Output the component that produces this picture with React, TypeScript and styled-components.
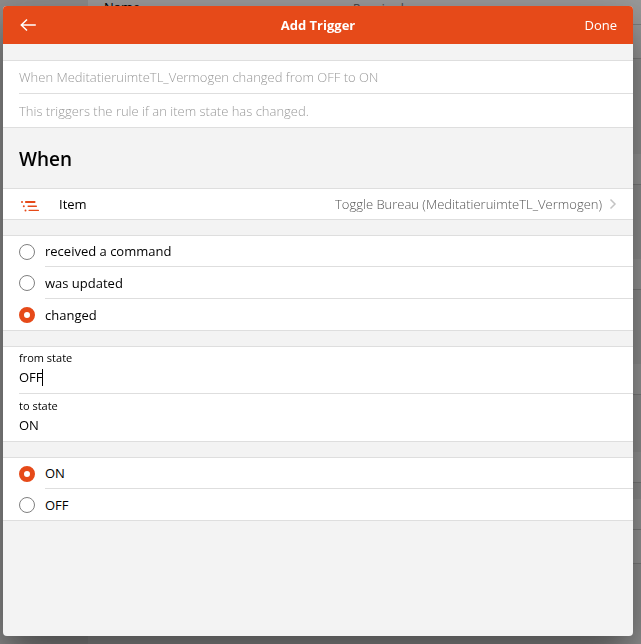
import React, { useState } from 'react';
import styled, { createGlobalStyle, css } from 'styled-components';

const accent = '#e64a19';
const line = '#dedede';
const surface = '#f3f3f3';

const GlobalStyle = createGlobalStyle`
  *, *::before, *::after { box-sizing: border-box; }
  html, body { margin: 0; height: 100%; overflow: hidden; }
  #root { height: 100%; }
  body, button, input {
    font-family: 'Open Sans', 'Noto Sans', sans-serif;
    font-size: 13px;
    line-height: 20px;
    color: #000;
  }
`;

/* Page behind the popup */
const Page = styled.div`
  display: flex;
  height: 100%;
  overflow: hidden;
  background: ${surface};
`;

const Sidebar = styled.aside`
  flex: 0 0 88px;
  background: #e9e9e9;
`;

const PageContent = styled.main`
  flex: 1;
`;

const PageGroup = styled.div<{ $gap: number }>`
  margin-top: ${(p) => p.$gap}px;
  background: #fff;
`;

const PageRow = styled.div<{ $height: number }>`
  display: grid;
  grid-template-columns: 249px 1fr;
  height: ${(p) => p.$height}px;
  padding-left: 16px;
  border-bottom: 1px solid #d2d2d2;
  line-height: 14px;
`;

const PageHint = styled.span`
  color: #777;
  font-size: 12px;
  line-height: 18px;
`;

/* Popup */
const Backdrop = styled.div`
  position: fixed;
  inset: 0;
  display: flex;
  padding: 6px 8px 8px 3px;
  background: rgba(0, 0, 0, 0.4);
`;

const Popup = styled.section`
  flex: 1;
  display: flex;
  flex-direction: column;
  overflow: hidden;
  border-radius: 4px;
  background: ${surface};
  box-shadow: 0 20px 44px rgba(0, 0, 0, 0.5);
`;

const Navbar = styled.header`
  display: grid;
  grid-template-columns: 1fr auto 1fr;
  align-items: center;
  height: 38px;
  padding: 0 16px;
  background: ${accent};
`;

const NavButton = styled.button<{ $end?: boolean }>`
  display: flex;
  justify-self: ${(p) => (p.$end ? 'end' : 'start')};
  padding: 0;
  border: 0;
  background: none;
  color: #fff;
  font-weight: 500;
  cursor: pointer;
`;

const Title = styled.h1`
  margin: 0;
  color: #fff;
  font-size: 13px;
  font-weight: 700;
  line-height: 20px;
`;

const Heading = styled.h2`
  margin: 0;
  padding: 16px 16px 14px;
  font-size: 19px;
  font-weight: 600;
  line-height: 30px;
`;

const List = styled.div<{ $gap?: number }>`
  margin-top: ${(p) => p.$gap ?? 15}px;
  background: #fff;
  border: solid ${line};
  border-width: 1px 0;
`;

const divider = css`
  border-bottom: 1px solid ${line};
`;

const TextRow = styled.div`
  padding-left: 16px;
`;

const PlainInput = styled.input<{ $divided?: boolean }>`
  display: block;
  width: 100%;
  height: 33px;
  padding: 0;
  border: 0;
  outline: none;
  background: transparent;
  font-weight: 300;
  ${(p) => p.$divided && divider}
  &::placeholder { color: #999; opacity: 1; }
`;

const ItemLink = styled.a`
  display: flex;
  align-items: center;
  height: 30px;
  padding: 0 16px;
  color: #000;
  text-decoration: none;
`;

const ItemTitle = styled.span`
  flex: 1;
  padding-left: 16px;
`;

const ItemValue = styled.span`
  padding-right: 7px;
  color: #555;
  font-weight: 300;
`;

const RadioLabel = styled.label`
  display: flex;
  align-items: center;
  gap: 10px;
  padding-left: 16px;
  cursor: pointer;
`;

const Radio = styled.input`
  appearance: none;
  flex: none;
  width: 16px;
  height: 16px;
  margin: 0;
  border: 1px solid #808080;
  border-radius: 50%;
  background: #fff;
  &:checked { border: 5px solid ${accent}; }
`;

const RadioText = styled.span`
  flex: 1;
  height: 32px;
  padding-top: 6px;
  ${divider}
  ${RadioLabel}:first-of-type & { height: 31px; padding-top: 5px; }
  ${RadioLabel}:last-of-type & { border-bottom: 0; height: 31px; }
`;

const Field = styled.div<{ $divided?: boolean }>`
  height: 47px;
  margin-left: 16px;
  padding-top: ${(p) => (p.$divided ? 2 : 3)}px;
  ${(p) => p.$divided && divider}
`;

const FieldLabel = styled.label`
  display: block;
  font-size: 11px;
  line-height: 18px;
`;

const FieldLine = styled.div`
  display: flex;
  align-items: center;
`;

const FieldInput = styled.input<{ $fit?: boolean }>`
  ${(p) => (p.$fit ? 'field-sizing: content; caret-color: transparent;' : 'flex: 1;')}
  height: 20px;
  padding: 0;
  border: 0;
  outline: none;
  background: transparent;
`;

const Caret = styled.span`
  width: 1px;
  height: 17px;
  margin-left: -1px;
  background: #000;
`;

const BackIcon = () => (
  <svg width="18" height="14" viewBox="0 0 18 14" fill="none" stroke="#fff" strokeWidth="1.5" aria-hidden="true">
    <path d="M8 1.500 2.300 7 8 12.500M2.500 7h14.300" />
  </svg>
);

const ItemIcon = () => (
  <svg width="24" height="16" viewBox="0 0 24 16" fill={accent} aria-hidden="true">
    <rect x="6" y="5" width="10.500" height="2" rx="0.800" />
    <rect x="8.500" y="9.600" width="9.500" height="1.300" rx="0.600" />
    <rect x="9.500" y="13.800" width="10.500" height="1.300" rx="0.600" />
    <circle cx="3" cy="6" r="1" />
    <circle cx="4.800" cy="10.200" r="1" />
    <circle cx="6.500" cy="14.500" r="1" />
  </svg>
);

const Chevron = () => (
  <svg width="8" height="12" viewBox="0 0 8 12" fill="none" stroke="#c4c4c4" strokeWidth="1.500" aria-hidden="true">
    <path d="M1.500 1.500 6 6l-4.500 4.500" />
  </svg>
);

type RadioListProps = {
  name: string;
  options: string[];
  value: string;
  onChange: (value: string) => void;
};

const RadioList = ({ name, options, value, onChange }: RadioListProps) => (
  <List role="radiogroup" aria-label={name}>
    {options.map((option) => (
      <RadioLabel key={option}>
        <Radio type="radio" name={name} checked={value === option} onChange={() => onChange(option)} />
        <RadioText>{option}</RadioText>
      </RadioLabel>
    ))}
  </List>
);

export default function App() {
  const [event, setEvent] = useState('changed');
  const [from, setFrom] = useState('OFF');
  const [to, setTo] = useState('ON');

  return (
    <>
      <GlobalStyle />
      <Page aria-hidden="true">
        <Sidebar />
        <PageContent>
          <PageGroup $gap={0}>
            <PageRow $height={25}>
              <span>Name</span>
              <PageHint>Required</PageHint>
            </PageRow>
            <PageRow $height={34} />
          </PageGroup>
          <PageGroup $gap={95}>
            <PageRow $height={31} />
          </PageGroup>
          <PageGroup $gap={74}>
            <PageRow $height={31} />
          </PageGroup>
          <PageGroup $gap={74}>
            <PageRow $height={31} />
          </PageGroup>
          <PageGroup $gap={57}>
            <PageRow $height={31} />
          </PageGroup>
          <PageGroup $gap={16}>
            <PageRow $height={31} />
            <PageRow $height={34} />
          </PageGroup>
        </PageContent>
      </Page>
      <Backdrop>
        <Popup role="dialog" aria-labelledby="popup-title">
          <Navbar>
            <NavButton type="button" aria-label="Back">
              <BackIcon />
            </NavButton>
            <Title id="popup-title">Add Trigger</Title>
            <NavButton type="button" $end>
              Done
            </NavButton>
          </Navbar>

          <List $gap={16}>
            <TextRow>
              <PlainInput
                $divided
                aria-label="Title"
                placeholder="When MeditatieruimteTL_Vermogen changed from OFF to ON"
              />
              <PlainInput aria-label="Description" placeholder="This triggers the rule if an item state has changed." />
            </TextRow>
          </List>

          <Heading>When</Heading>
          <List $gap={0}>
            <ItemLink href="#item">
              <ItemIcon />
              <ItemTitle>Item</ItemTitle>
              <ItemValue>Toggle Bureau (MeditatieruimteTL_Vermogen)</ItemValue>
              <Chevron />
            </ItemLink>
          </List>

          <RadioList
            name="event"
            options={['received a command', 'was updated', 'changed']}
            value={event}
            onChange={setEvent}
          />

          <List>
            <Field $divided>
              <FieldLabel htmlFor="from-state">from state</FieldLabel>
              <FieldLine>
                <FieldInput id="from-state" $fit value={from} onChange={(e) => setFrom(e.target.value)} />
                <Caret />
              </FieldLine>
            </Field>
            <Field>
              <FieldLabel htmlFor="to-state">to state</FieldLabel>
              <FieldLine>
                <FieldInput id="to-state" value={to} onChange={(e) => setTo(e.target.value)} />
              </FieldLine>
            </Field>
          </List>

          <RadioList name="state" options={['ON', 'OFF']} value={to} onChange={setTo} />
        </Popup>
      </Backdrop>
    </>
  );
}
